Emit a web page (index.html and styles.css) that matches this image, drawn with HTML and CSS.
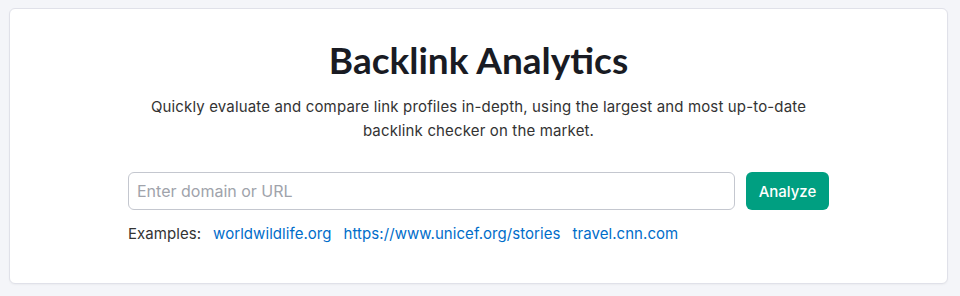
FILE: index.html
```html
<!DOCTYPE html>
<html lang="en">
<head>
<meta charset="utf-8">
<title>Backlink Analytics</title>
<link rel="stylesheet" href="styles.css">
</head>
<body>
<main class="card">
  <h1 class="title">Backlink Analytics</h1>
  <p class="lead">Quickly evaluate and compare link profiles in-depth, using the largest and most up-to-date<br>backlink checker on the market.</p>
  <form class="search" onsubmit="return false">
    <input class="search-input" type="text" placeholder="Enter domain or URL">
    <button class="search-btn" type="submit">Analyze</button>
  </form>
  <div class="examples">
    <span class="examples-label">Examples:</span>
    <a class="example" href="#">worldwildlife.org</a>
    <a class="example" href="#">https://www.unicef.org/stories</a>
    <a class="example" href="#">travel.cnn.com</a>
  </div>
</main>
</body>
</html>
```
FILE: styles.css
```css
html, body {
  margin: 0;
  padding: 0;
}
body {
  background: #f4f5f9;
  font-family: Inter, "Noto Sans", sans-serif;
  color: #191b23;
  padding: 8px 12px 12px 9px;
}
.card {
  background: #fff;
  border: 1px solid #e0e1e9;
  border-radius: 6px;
  box-shadow: 0 1px 2px rgba(0,0,0,0.04);
  height: 276px;
  box-sizing: border-box;
  display: flex;
  flex-direction: column;
  align-items: center;
  padding-top: 28px;
}
.title {
  margin: 0;
  font-family: Lato, Inter, sans-serif;
  font-size: 37px;
  line-height: 46px;
  font-weight: 700;
  color: #191b23;
}
.lead {
  margin: 12px 0 0;
  font-size: 15px;
  letter-spacing: 0.15px;
  line-height: 24px;
  text-align: center;
  color: #333;
}
.search {
  margin-top: 29px;
  display: flex;
  gap: 11px;
  width: 701px;
}
.search-input {
  flex: 1;
  height: 38px;
  box-sizing: border-box;
  border: 1px solid #c4c7cf;
  border-radius: 6px;
  padding: 0 8px;
  font-family: inherit;
  font-size: 16px;
  color: #191b23;
  outline: none;
}
.search-input::placeholder {
  color: #a0a3ab;
}
.search-btn {
  width: 83px;
  height: 38px;
  border: none;
  border-radius: 6px;
  background: #009f81;
  color: #fff;
  font-family: inherit;
  font-size: 15px;
  font-weight: 500;
  cursor: pointer;
}
.examples {
  width: 701px;
  margin-top: 12px;
  display: flex;
  gap: 12px;
  font-size: 15px;
  letter-spacing: 0.06px;
  line-height: 24px;
}
.examples-label {
  color: #333;
}
.example {
  color: #006dca;
  text-decoration: none;
}
```
